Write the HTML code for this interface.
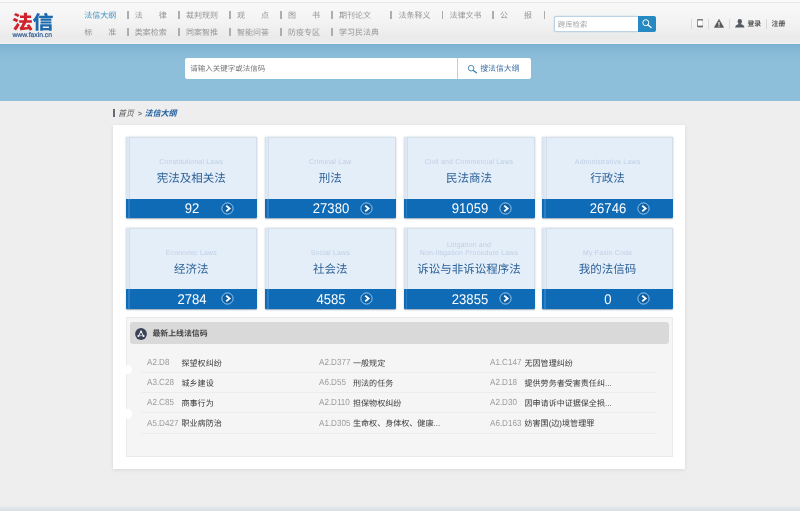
<!DOCTYPE html>
<html lang="zh-CN">
<head>
<meta charset="utf-8">
<title>法信大纲 - 法信</title>
<style>
*{margin:0;padding:0;box-sizing:border-box;}
html,body{width:800px;height:511px;overflow:hidden;background:#eeeeee;}
body{text-rendering:geometricPrecision;font-family:"Liberation Sans","Noto Sans CJK SC",sans-serif;position:relative;color:#666;}
#wrap{position:absolute;left:0;top:0;width:800px;height:511px;will-change:transform;}
.abs{position:absolute;white-space:nowrap;}
#hdr{position:absolute;left:0;top:0;width:800px;height:44px;background:linear-gradient(#f8f8f8 3px,#f6f6f6 12px,#f3f3f3 22px,#eeeeee 31px,#ebeaea 38px,#ececec 41px,#f1f1f1 44px);}
#band{position:absolute;left:0;top:44.1px;width:800px;height:56.9px;background:linear-gradient(#78b0cf 0px,#82b7d4 4px,#8bbdd8 12px,#8ebfda 22px,#8ebfda 100%);}
.logo{font-weight:900;font-size:21px;line-height:22px;letter-spacing:-0.5px;transform:scaleY(0.9);transform-origin:0 100%;}
.url{font-size:6.8px;line-height:7px;color:#2c5a94;-webkit-text-stroke:0.2px #2c5a94;}
.nav{font-size:8px;line-height:10px;color:#969696;}
.nav span{position:absolute;white-space:nowrap;top:0;}
.nav .sep{width:1.4px;height:8.6px;background:#adadad;top:0.1px;margin-left:0px;font-size:0;overflow:hidden;}
.nav .on{color:#4896c1;}
#tsearch{position:absolute;left:554.2px;top:16.3px;width:84px;height:15.4px;border:1px solid #bcd3e4;box-shadow:0 0 1.5px rgba(120,170,210,0.5);border-right:none;border-radius:2px 0 0 2px;background:#fff;}
#tbtn{position:absolute;left:638px;top:16.3px;width:17.6px;height:15.4px;background:#2789c1;border-radius:0 2px 2px 0;}
.tr{font-size:6.85px;line-height:9px;color:#555;font-weight:bold;}
.tsep{position:absolute;top:18.5px;width:1px;height:10.5px;background:#d9d9d9;}
#sbox{position:absolute;left:185px;top:58.1px;width:346px;height:20.9px;background:#fff;border-radius:2px;}
#sdiv{position:absolute;left:457px;top:58.1px;width:1px;height:20.9px;background:#b5d2e4;}
#crumb{font-size:7.9px;line-height:10px;font-style:italic;color:#555;}
#panel{position:absolute;left:112.7px;top:124.6px;width:572.4px;height:344px;background:#fff;box-shadow:0 1px 4px rgba(0,0,0,0.09);}
.card{position:absolute;width:131.1px;height:80.6px;background:#e4eef9;border-radius:1px;box-shadow:0 0.6px 1.4px rgba(50,80,120,0.5), inset 0.8px 0 0 #c0cbd8, inset 0 0.8px 0 #d0dbe9, inset -0.7px 0 0 #cdd8e6;overflow:hidden;}
.card:before{content:"";position:absolute;left:0;top:0;width:3.6px;height:62px;background:linear-gradient(to right,#d9e3f0,#e1eaf6);border-right:0.7px solid #d3deeb;}
.card .bar:before{content:"";position:absolute;left:2.1px;top:0;width:1.7px;height:100%;background:#2a7fc6;}
.card .en{position:absolute;left:0;width:131px;text-align:center;font-size:6.9px;letter-spacing:0.22px;line-height:7px;color:#bdcee4;top:21.6px;}
.card .zh{position:absolute;left:0;width:131px;text-align:center;font-size:11.5px;line-height:14px;color:#2d6298;top:35.1px;}
.card .bar{position:absolute;left:0;top:61.3px;width:131.3px;height:19.4px;background:#0f6bb5;}
.card .num{position:absolute;top:62.1px;margin-left:1.1px;font-size:14.1px;line-height:18px;color:#fff;text-align:center;transform:scaleX(0.93);}
.card svg{position:absolute;top:64.4px;}
#lst{position:absolute;left:125.6px;top:316.8px;width:547.6px;height:139.9px;background:#f5f5f5;border:1px solid #ebebeb;}
#lhead{position:absolute;left:129.6px;top:322.4px;width:539.1px;height:21.8px;background:#d9d9d9;border-radius:3px;}
.ltitle{font-size:7.9px;font-weight:bold;color:#444;line-height:10px;}
.row{position:absolute;left:140.5px;width:516px;height:20.1px;border-bottom:1px solid #ededed;font-size:7.9px;line-height:10px;}
.row span{position:absolute;top:4.1px;white-space:nowrap;}
.row .c{color:#9c9c9c;font-size:8.9px;transform:scaleX(0.91);transform-origin:0 50%;margin-top:0.1px;}
.row .n{color:#3a3a3a;font-size:8.05px;margin-top:1.55px;}
.notch{position:absolute;width:9.3px;height:9.3px;border-radius:50%;background:#fff;}
#foot{position:absolute;left:0;top:506.3px;width:800px;height:5px;background:linear-gradient(#eaedef 0px,#dfe5e8 2px,#d9e0e4 5px);}
</style>
</head>
<body>
<div id="wrap">
<div id="hdr"></div>
<div class="abs" style="left:0;top:0;width:800px;height:3.2px;background:#fafafa;border-bottom:0.8px solid #e6e6e6;"></div>
<div id="band"></div>

<!-- logo -->
<div class="abs logo" style="left:11.9px;top:11px;"><span style="color:#cf232b">法</span><span style="color:#1d69ad">信</span></div>
<div class="abs url" style="left:12.4px;top:31.6px;">www.faxin.cn</div>

<!-- nav row 1 -->
<div class="nav abs" style="left:0;top:10.6px;width:560px;height:10px;">
<span class="on" style="left:84.3px">法信大纲</span><span class="sep" style="left:127.3px"></span>
<span style="left:134.8px">法　　律</span><span class="sep" style="left:178.3px"></span>
<span style="left:186px">裁判规则</span><span class="sep" style="left:229.3px"></span>
<span style="left:237px">观　　点</span><span class="sep" style="left:280.4px"></span>
<span style="left:288px">图　　书</span><span class="sep" style="left:331.3px"></span>
<span style="left:339px">期刊论文</span><span class="sep" style="left:390.2px"></span>
<span style="left:398.5px">法条释义</span><span class="sep" style="left:441.5px"></span>
<span style="left:449.5px">法律文书</span><span class="sep" style="left:492.2px"></span>
<span style="left:500px">公　　报</span><span class="sep" style="left:543.5px"></span>
</div>
<!-- nav row 2 -->
<div class="nav abs" style="left:0;top:27.6px;width:560px;height:10px;">
<span style="left:84.3px">标　　准</span><span class="sep" style="left:127.3px"></span>
<span style="left:134.8px">类案检索</span><span class="sep" style="left:178.3px"></span>
<span style="left:186px">同案智推</span><span class="sep" style="left:229.3px"></span>
<span style="left:237px">智能问答</span><span class="sep" style="left:280.4px"></span>
<span style="left:288px">防疫专区</span><span class="sep" style="left:331.3px"></span>
<span style="left:339px">学习民法典</span>
</div>

<!-- top search -->
<div id="tsearch"></div>
<div class="abs" style="left:557.8px;top:19.6px;font-size:7.4px;line-height:9px;color:#a6a6a6;">跨库检索</div>
<div id="tbtn"><svg width="18" height="15.5" viewBox="0 0 18 15.5" style="position:absolute;left:0;top:0"><circle cx="7.8" cy="6.7" r="3" fill="none" stroke="#fff" stroke-width="1"/><path d="M10 8.9 L13.1 11.5" stroke="#fff" stroke-width="1.3" stroke-linecap="round"/></svg></div>

<!-- top right icons -->
<div class="tsep" style="left:691px"></div>
<svg class="abs" style="left:696.7px;top:19.2px" width="6.6" height="8.4" viewBox="0 0 6.6 8.4"><rect x="0.4" y="0.4" width="5.8" height="7.6" rx="0.9" fill="#fff" stroke="#6e6e6e" stroke-width="0.8"/><rect x="0.4" y="0.4" width="5.8" height="1.1" fill="#6e6e6e"/><rect x="0.4" y="6.6" width="5.8" height="1.4" fill="#6e6e6e"/></svg>
<div class="tsep" style="left:708px"></div>
<svg class="abs" style="left:713.6px;top:19px" width="10" height="8.8" viewBox="0 0 10 8.8"><path d="M5 0.2 L9.8 8.5 L0.2 8.5 Z" fill="#585858" stroke="#585858" stroke-width="0.4" stroke-linejoin="round"/><rect x="4.45" y="2.9" width="1.1" height="3" fill="#fff"/><rect x="4.45" y="6.5" width="1.1" height="1.1" fill="#fff"/></svg>
<div class="tsep" style="left:729px"></div>
<svg class="abs" style="left:735px;top:19px" width="9.6" height="8.8" viewBox="0 0 9.6 8.8"><ellipse cx="4.8" cy="2.5" rx="2.2" ry="2.5" fill="#555a62"/><path d="M3.7 4.2 L5.9 4.2 L5.9 5.3 C7.6 5.7 9.4 6.2 9.4 8.6 L0.2 8.6 C0.2 6.2 2 5.7 3.7 5.3 Z" fill="#555a62"/></svg>
<div class="abs tr" style="left:747.4px;top:19.6px;">登录</div>
<div class="tsep" style="left:766px"></div>
<div class="abs tr" style="left:771.6px;top:19.6px;">注册</div>

<!-- main search -->
<div id="sbox"></div>
<div id="sdiv"></div>
<div class="abs" style="left:190.3px;top:63.9px;font-size:7.5px;line-height:10px;color:#777;">请输入关键字或法信码</div>
<svg class="abs" style="left:466.5px;top:64.2px" width="11" height="10" viewBox="0 0 11 10"><circle cx="4.1" cy="4.2" r="2.8" fill="none" stroke="#3580b0" stroke-width="0.9"/><path d="M6.2 6.4 L9.5 8.8" stroke="#3580b0" stroke-width="1.2" stroke-linecap="round"/></svg>
<div class="abs" style="left:480.2px;top:64.4px;font-size:7.9px;line-height:10px;color:#3c6fa2;">搜法信大纲</div>

<!-- breadcrumb -->
<div class="abs" style="left:112.8px;top:109px;width:1.9px;height:7.6px;background:#636b74;"></div>
<div id="crumb" class="abs" style="left:118px;top:108.8px;">首页<span class="abs" style="left:19.8px;top:0;font-size:7.4px;font-style:normal;font-weight:bold;color:#777">&gt;</span><span class="abs" style="left:26.4px;top:0;font-size:8.05px;font-weight:bold;color:#1d5d9c;">法信大纲</span></div>

<div id="panel"></div>

<!-- cards row 1 -->
<div class="card" style="left:125.8px;top:137.3px;"><div class="en">Constitutional Laws</div><div class="zh">宪法及相关法</div><div class="bar"></div><div class="num" style="left:40px;width:50px;">92</div><svg style="left:95px" width="13" height="13" viewBox="0 0 13 13"><circle cx="6.5" cy="6.5" r="5.6" fill="#0d60a6" stroke="#a5d5f7" stroke-width="0.9"/><path d="M5.2 3.6 L8.6 6.5 L5.2 9.4" fill="none" stroke="#fff" stroke-width="1.9"/></svg></div>
<div class="card" style="left:264.8px;top:137.3px;"><div class="en">Criminal Law</div><div class="zh">刑法</div><div class="bar"></div><div class="num" style="left:40px;width:50px;">27380</div><svg style="left:95px" width="13" height="13" viewBox="0 0 13 13"><circle cx="6.5" cy="6.5" r="5.6" fill="#0d60a6" stroke="#a5d5f7" stroke-width="0.9"/><path d="M5.2 3.6 L8.6 6.5 L5.2 9.4" fill="none" stroke="#fff" stroke-width="1.9"/></svg></div>
<div class="card" style="left:403.5px;top:137.3px;"><div class="en">Civil and Commercial Laws</div><div class="zh">民法商法</div><div class="bar"></div><div class="num" style="left:40px;width:50px;">91059</div><svg style="left:95px" width="13" height="13" viewBox="0 0 13 13"><circle cx="6.5" cy="6.5" r="5.6" fill="#0d60a6" stroke="#a5d5f7" stroke-width="0.9"/><path d="M5.2 3.6 L8.6 6.5 L5.2 9.4" fill="none" stroke="#fff" stroke-width="1.9"/></svg></div>
<div class="card" style="left:542.1px;top:137.3px;"><div class="en">Administrative Laws</div><div class="zh">行政法</div><div class="bar"></div><div class="num" style="left:40px;width:50px;">26746</div><svg style="left:95px" width="13" height="13" viewBox="0 0 13 13"><circle cx="6.5" cy="6.5" r="5.6" fill="#0d60a6" stroke="#a5d5f7" stroke-width="0.9"/><path d="M5.2 3.6 L8.6 6.5 L5.2 9.4" fill="none" stroke="#fff" stroke-width="1.9"/></svg></div>

<!-- cards row 2 -->
<div class="card" style="left:125.8px;top:228px;"><div class="en">Economic Laws</div><div class="zh">经济法</div><div class="bar"></div><div class="num" style="left:40px;width:50px;">2784</div><svg style="left:95px" width="13" height="13" viewBox="0 0 13 13"><circle cx="6.5" cy="6.5" r="5.6" fill="#0d60a6" stroke="#a5d5f7" stroke-width="0.9"/><path d="M5.2 3.6 L8.6 6.5 L5.2 9.4" fill="none" stroke="#fff" stroke-width="1.9"/></svg></div>
<div class="card" style="left:264.8px;top:228px;"><div class="en">Social Laws</div><div class="zh">社会法</div><div class="bar"></div><div class="num" style="left:40px;width:50px;">4585</div><svg style="left:95px" width="13" height="13" viewBox="0 0 13 13"><circle cx="6.5" cy="6.5" r="5.6" fill="#0d60a6" stroke="#a5d5f7" stroke-width="0.9"/><path d="M5.2 3.6 L8.6 6.5 L5.2 9.4" fill="none" stroke="#fff" stroke-width="1.9"/></svg></div>
<div class="card" style="left:403.5px;top:228px;"><div class="en" style="top:14px;">Litigation and</div><div class="en">Non-litigation Procedure Laws</div><div class="zh">诉讼与非诉讼程序法</div><div class="bar"></div><div class="num" style="left:40px;width:50px;">23855</div><svg style="left:95px" width="13" height="13" viewBox="0 0 13 13"><circle cx="6.5" cy="6.5" r="5.6" fill="#0d60a6" stroke="#a5d5f7" stroke-width="0.9"/><path d="M5.2 3.6 L8.6 6.5 L5.2 9.4" fill="none" stroke="#fff" stroke-width="1.9"/></svg></div>
<div class="card" style="left:542.1px;top:228px;"><div class="en">My Faxin Code</div><div class="zh">我的法信码</div><div class="bar"></div><div class="num" style="left:40px;width:50px;">0</div><svg style="left:95px" width="13" height="13" viewBox="0 0 13 13"><circle cx="6.5" cy="6.5" r="5.6" fill="#0d60a6" stroke="#a5d5f7" stroke-width="0.9"/><path d="M5.2 3.6 L8.6 6.5 L5.2 9.4" fill="none" stroke="#fff" stroke-width="1.9"/></svg></div>

<!-- list -->
<div id="lst"></div>
<div class="notch" style="left:122.6px;top:364.8px;"></div>
<div class="notch" style="left:122.6px;top:409.3px;"></div>
<div id="lhead"></div>
<svg class="abs" style="left:135.4px;top:327.9px" width="12" height="12" viewBox="0 0 12 12"><circle cx="6" cy="6" r="5.9" fill="#3b4359"/><path d="M3.6 8 L6 3.2 L8.4 8" fill="none" stroke="#fff" stroke-width="1" stroke-linejoin="round"/><circle cx="6" cy="3.4" r="0.9" fill="#fff"/><circle cx="3.5" cy="8" r="1.05" fill="#fff"/><circle cx="8.5" cy="8" r="1.05" fill="#fff"/><circle cx="6" cy="7.6" r="0.7" fill="#fff"/></svg>
<div class="abs ltitle" style="left:152.4px;top:329.3px;">最新上线法信码</div>

<div class="row" style="top:353px;"><span class="c" style="left:6px">A2.D8</span><span class="n" style="left:41px">探望权纠纷</span><span class="c" style="left:178px">A2.D377</span><span class="n" style="left:212.5px">一般规定</span><span class="c" style="left:349.5px">A1.C147</span><span class="n" style="left:384px">无因管理纠纷</span></div>
<div class="row" style="top:373.15px;"><span class="c" style="left:6px">A3.C28</span><span class="n" style="left:41px">城乡建设</span><span class="c" style="left:178px">A6.D55</span><span class="n" style="left:212.5px">刑法的任务</span><span class="c" style="left:349.5px">A2.D18</span><span class="n" style="left:384px">提供劳务者受害责任纠...</span></div>
<div class="row" style="top:393.3px;"><span class="c" style="left:6px">A2.C85</span><span class="n" style="left:41px">商事行为</span><span class="c" style="left:178px">A2.D110</span><span class="n" style="left:212.5px">担保物权纠纷</span><span class="c" style="left:349.5px">A2.D30</span><span class="n" style="left:384px">因申请诉中证据保全损...</span></div>
<div class="row" style="top:413.45px;"><span class="c" style="left:6px">A5.D427</span><span class="n" style="left:41px">职业病防治</span><span class="c" style="left:178px">A1.D305</span><span class="n" style="left:212.5px">生命权、身体权、健康...</span><span class="c" style="left:349.5px">A6.D163</span><span class="n" style="left:384px">妨害国(边)境管理罪</span></div>

<div id="foot"></div>
</div>
</body>
</html>
